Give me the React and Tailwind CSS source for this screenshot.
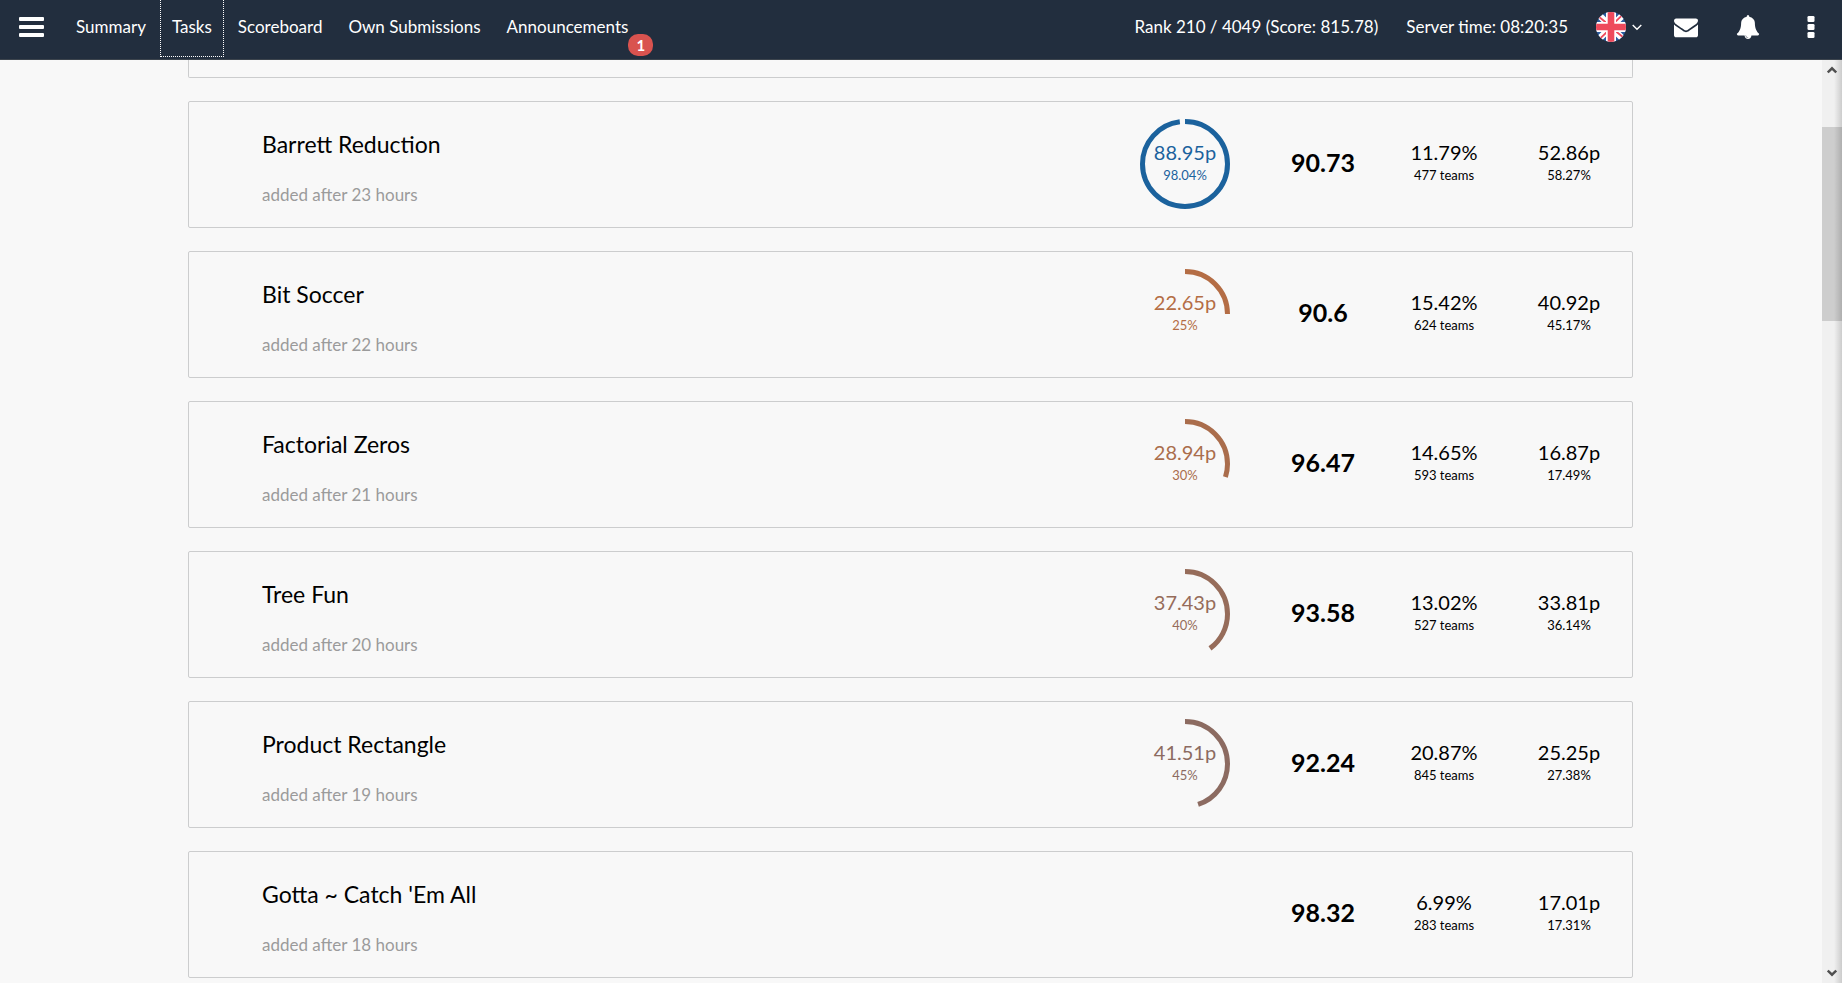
const NAV = [
  { label: 'Summary' },
  { label: 'Tasks', active: true },
  { label: 'Scoreboard' },
  { label: 'Own Submissions' },
  { label: 'Announcements', badge: 1 },
];

const TASKS = [
  { name: 'Barrett Reduction', hours: 23, own: { points: '88.95p', percent: 98.04, color: '#1b629d' }, value: '90.73', solved: '11.79%', teams: 477, average: '52.86p', averagePercent: '58.27%' },
  { name: 'Bit Soccer', hours: 22, own: { points: '22.65p', percent: 25, color: '#b46d45' }, value: '90.6', solved: '15.42%', teams: 624, average: '40.92p', averagePercent: '45.17%' },
  { name: 'Factorial Zeros', hours: 21, own: { points: '28.94p', percent: 30, color: '#aa6d4c' }, value: '96.47', solved: '14.65%', teams: 593, average: '16.87p', averagePercent: '17.49%' },
  { name: 'Tree Fun', hours: 20, own: { points: '37.43p', percent: 40, color: '#966c5a' }, value: '93.58', solved: '13.02%', teams: 527, average: '33.81p', averagePercent: '36.14%' },
  { name: 'Product Rectangle', hours: 19, own: { points: '41.51p', percent: 45, color: '#8c6b61' }, value: '92.24', solved: '20.87%', teams: 845, average: '25.25p', averagePercent: '27.38%' },
  { name: "Gotta ~ Catch 'Em All", hours: 18, own: null, value: '98.32', solved: '6.99%', teams: 283, average: '17.01p', averagePercent: '17.31%' },
];

function BarsIcon() {
  return (
    <svg width="25" height="20" viewBox="0 0 25 20" fill="currentColor" aria-hidden="true">
      <rect width="25" height="4" rx="1" />
      <rect y="8" width="25" height="4" rx="1" />
      <rect y="16" width="25" height="4" rx="1" />
    </svg>
  );
}

function FlagIcon() {
  return (
    <svg width="30" height="30" viewBox="0 0 30 30" aria-hidden="true">
      <defs>
        <clipPath id="flag-disc">
          <circle cx="15" cy="15" r="15" />
        </clipPath>
      </defs>
      <g clipPath="url(#flag-disc)">
        <rect width="30" height="30" fill="#2a5b9f" />
        <path d="M0 2 28 30M2 0 30 28M2 30 30 2M0 28 28 0" stroke="#fff" strokeWidth="3.6" />
        <path d="M3.2 5 13 13M25.5 3.8 17 12M4.5 26.2 13 18M26.8 25 17 17" stroke="#ee4a5c" strokeWidth="1.8" />
        <path d="M15 0V30M0 15H30" stroke="#fff" strokeWidth="10" />
        <path d="M15 0V30M0 15H30" stroke="#ee4a5c" strokeWidth="6.6" />
      </g>
    </svg>
  );
}

function ChevronIcon() {
  return (
    <svg width="10" height="8" viewBox="0 0 10 8" fill="none" stroke="currentColor" strokeWidth="1.4" aria-hidden="true">
      <path d="M.7 2 5 6.3 9.3 2" />
    </svg>
  );
}

function EnvelopeIcon() {
  return (
    <svg width="24" height="24" viewBox="0 0 1792 1792" fill="currentColor" aria-hidden="true">
      <path d="M1792 710v794q0 66-47 113t-113 47h-1472q-66 0-113-47t-47-113v-794q44 49 101 87 362 246 497 345 57 42 92.5 65.5t94.5 48 110 24.5h2q51 0 110-24.5t94.5-48 92.5-65.5q170-123 498-345 57-39 100-87zm0-294q0 79-49 151t-122 123q-376 261-468 325-10 7-42.5 31t-54 38.5-52 32.5-57.5 27-50 9h-2q-23 0-50-9t-57.5-27-52-32.5-54-38.5-42.5-31q-91-64-262-182.5t-205-142.5q-62-42-117-115.5t-55-136.5q0-78 41.5-130t118.5-52h1472q65 0 112.5 47t47.5 113z" />
    </svg>
  );
}

function BellIcon() {
  return (
    <svg width="24" height="24" viewBox="0 0 1792 1792" fill="currentColor" aria-hidden="true">
      <path d="M912 1696q0-16-16-16-59 0-101.5-42.5t-42.5-101.5q0-16-16-16t-16 16q0 73 51.5 124.5t124.5 51.5q16 0 16-16zm816-288q0 52-38 90t-90 38h-448q0 106-75 181t-181 75-181-75-75-181h-448q-52 0-90-38t-38-90q50-42 91-88t85-119.5 74.5-158.5 50-206 19.5-260q0-152 117-282.5t307-158.5q-8-19-8-39 0-40 28-68t68-28 68 28 28 68q0 20-8 39 190 28 307 158.5t117 282.5q0 139 19.5 260t50 206 74.5 158.5 85 119.5 91 88z" />
    </svg>
  );
}

function EllipsisIcon() {
  return (
    <svg width="8" height="22" viewBox="0 0 8 22" fill="currentColor" aria-hidden="true">
      <rect x=".5" width="7" height="6" rx="1.3" />
      <rect x=".5" y="8" width="7" height="6" rx="1.3" />
      <rect x=".5" y="16" width="7" height="6" rx="1.3" />
    </svg>
  );
}

function Header() {
  return (
    <header className="flex shrink-0 border-b border-[#3c444d] bg-[#222e3e] text-[17px] leading-[53px] text-white">
      <button type="button" aria-label="Toggle menu" className="flex h-[53px] items-center pr-5 pl-[19px]">
        <BarsIcon />
      </button>
      <nav className="flex gap-[2px] pb-[2px]">
        {NAV.map((item) => (
          <a
            key={item.label}
            href="#"
            className={
              item.active
                ? 'relative border border-t-0 border-dotted border-white px-[11px] pb-[3px]'
                : 'relative border border-t-0 border-transparent px-[11px] pb-[3px]'
            }
          >
            {item.label}
            {item.badge && (
              <span className="absolute -right-[14px] bottom-0 flex h-[22px] w-[25px] items-center justify-center rounded-[10px] bg-[#d9534f] text-[15px] leading-[20px] font-bold">
                {item.badge}
              </span>
            )}
          </a>
        ))}
      </nav>
      <div className="ml-auto flex h-[53px] items-center pr-[27px]">
        <span className="mr-7">Rank 210 / 4049 (Score: 815.78)</span>
        <span className="mr-7">Server time: 08:20:35</span>
        <button type="button" aria-label="Language" className="mr-8 flex items-center gap-[6px]">
          <FlagIcon />
          <ChevronIcon />
        </button>
        <button type="button" aria-label="Messages" className="mr-[38px]">
          <EnvelopeIcon />
        </button>
        <button type="button" aria-label="Notifications" className="mr-[47px]">
          <BellIcon />
        </button>
        <button type="button" aria-label="More">
          <EllipsisIcon />
        </button>
      </div>
    </header>
  );
}

function Stat({ value, detail }) {
  return (
    <div className="flex flex-col items-center gap-[3px] pb-[6px]">
      <span className="text-[20px] leading-6">{value}</span>
      <span className="text-[13px] leading-4">{detail}</span>
    </div>
  );
}

function ProgressRing({ points, percent, color }) {
  return (
    <div className="grid place-items-center pb-[1px]" style={{ color }}>
      <svg width="90" height="90" viewBox="0 0 90 90" className="col-start-1 row-start-1" aria-hidden="true">
        <circle
          cx="45"
          cy="45"
          r="42.5"
          fill="none"
          stroke="currentColor"
          strokeWidth="5"
          pathLength="100"
          strokeDasharray={`${percent} 100`}
          transform="rotate(-90 45 45)"
        />
      </svg>
      <div className="col-start-1 row-start-1">
        <Stat value={points} detail={`${percent}%`} />
      </div>
    </div>
  );
}

function TaskCard({ task }) {
  return (
    <li className="grid h-[127px] grid-cols-[1fr_158px_118px_124px_126px] items-center rounded-[2px] border border-[#cccdce]">
      <div className="pt-2 pl-[73px]">
        <h2 className="text-[23px] leading-7">
          <a href="#">{task.name}</a>
        </h2>
        <p className="mt-[25px] text-[17px] leading-6 text-[#9b9b9b]">added after {task.hours} hours</p>
      </div>
      {task.own ? <ProgressRing {...task.own} /> : <span />}
      <strong className="pb-[6px] text-center text-[25px] leading-8 font-bold">{task.value}</strong>
      <Stat value={task.solved} detail={`${task.teams} teams`} />
      <Stat value={task.average} detail={task.averagePercent} />
    </li>
  );
}

function ScrollBar() {
  return (
    <div className="relative flex w-5 shrink-0 flex-col bg-[#f0f0f0]">
      <button type="button" aria-label="Scroll up" className="flex h-5 items-center justify-center text-[#505050]">
        <svg width="10" height="8" viewBox="0 0 10 8" fill="none" stroke="currentColor" strokeWidth="2.4" aria-hidden="true">
          <path d="M.8 6.5 5 2.3 9.2 6.5" />
        </svg>
      </button>
      <div className="flex flex-1 flex-col pt-[47px]">
        <div className="h-[194px] bg-[#cdcdcd]" />
      </div>
      <button type="button" aria-label="Scroll down" className="flex h-5 items-center justify-center text-[#505050]">
        <svg width="10" height="8" viewBox="0 0 10 8" fill="none" stroke="currentColor" strokeWidth="2.4" aria-hidden="true">
          <path d="M.8 1.5 5 5.7 9.2 1.5" />
        </svg>
      </button>
      <div className="pointer-events-none absolute inset-y-0 right-0 w-2 bg-linear-to-l from-black/15 to-transparent" />
    </div>
  );
}

export default function App() {
  return (
    <div className="flex h-screen flex-col bg-[#f8f8f8] font-['Lato',sans-serif] text-black">
      <Header />
      <div className="flex min-h-0 flex-1">
        <main className="flex-1 overflow-hidden pr-[189px] pl-[188px]">
          <ul className="flex flex-col gap-[23px]">
            <li className="h-[18px] rounded-b-[2px] border border-t-0 border-[#cccdce]" />
            {TASKS.map((task) => (
              <TaskCard key={task.name} task={task} />
            ))}
          </ul>
        </main>
        <ScrollBar />
      </div>
    </div>
  );
}
